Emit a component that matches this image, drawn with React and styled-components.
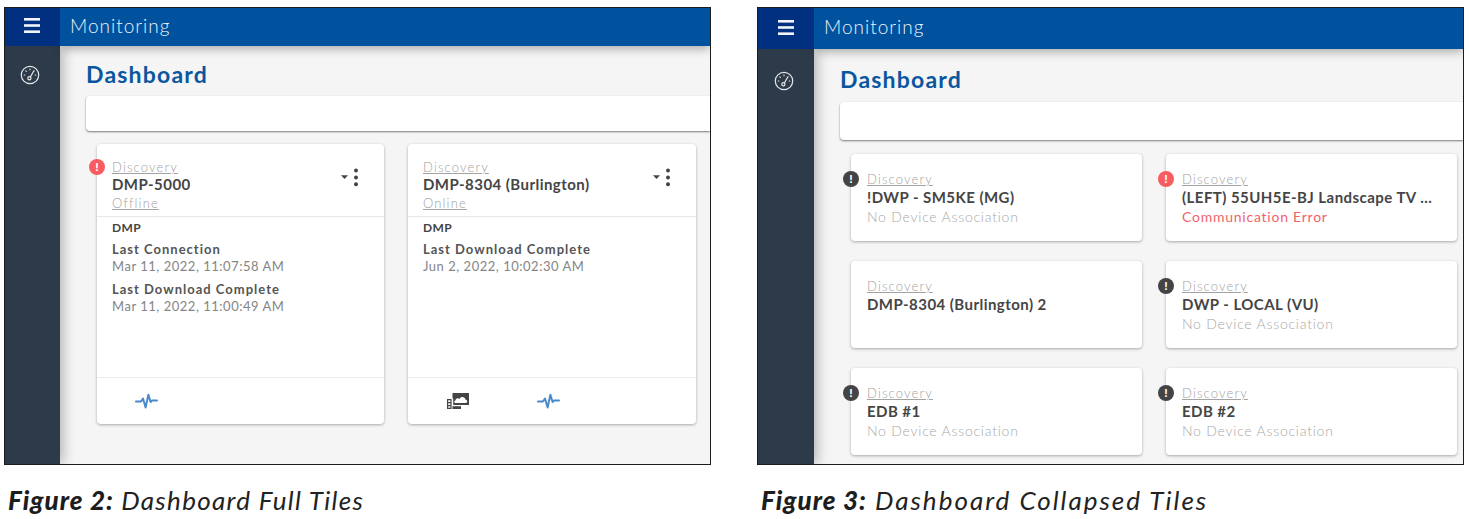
import styled, { createGlobalStyle } from 'styled-components';

const GlobalStyle = createGlobalStyle`
  body {
    margin: 0;
    background: #fff;
    font-family: 'Lato', 'Open Sans', sans-serif;
  }
`;

const Page = styled.div`
  display: flex;
  gap: 46px;
  width: 1469px;
  height: 519px;
  padding: 7px 0 0 4px;
  box-sizing: border-box;
  overflow: hidden;
`;

const Figure = styled.figure`
  margin: 0;
  width: 707px;
`;

const Frame = styled.div`
  display: grid;
  grid-template-columns: ${p => p.$rail}px 1fr;
  grid-template-rows: ${p => p.$bar}px 1fr;
  width: 707px;
  height: 458px;
  box-sizing: border-box;
  border: 1.5px solid #1c1c1c;
  overflow: hidden;
`;

const MenuCell = styled.div`
  display: flex;
  align-items: center;
  justify-content: center;
  padding: 0 1px 3px 0;
  background: #00307f;
  position: relative;
  z-index: 3;
`;

const TopBar = styled.header`
  display: flex;
  align-items: center;
  padding: 0 0 ${p => p.$lift}px 10px;
  background: #00529f;
  color: #eef3fa;
  font-size: 19px;
  font-weight: 300;
  letter-spacing: 1px;
  box-shadow: 0 3px 9px rgba(0, 0, 0, 0.3);
  position: relative;
  z-index: 2;
`;

const SideRail = styled.nav`
  display: flex;
  justify-content: center;
  padding: ${p => p.$top}px 5px 0 0;
  background: #2d3a49;
  box-shadow: 3px 0 12px rgba(0, 0, 0, 0.28);
  position: relative;
  z-index: 1;
`;

const Main = styled.main`
  display: flex;
  flex-direction: column;
  padding-left: 26px;
  background: #f5f5f5;
  min-width: 0;
`;

const Heading = styled.h1`
  margin: ${p => p.$top}px 0 ${p => p.$bottom}px;
  height: 28px;
  line-height: 28px;
  font-size: 23px;
  font-weight: 700;
  letter-spacing: 1.2px;
  color: #0a569f;
`;

const FilterBar = styled.div`
  flex: none;
  height: ${p => p.$height}px;
  background: #fff;
  border-radius: 4px 0 0 4px;
  box-shadow: 0 1px 2px rgba(0, 0, 0, 0.5);
`;

const TileGrid = styled.div`
  display: grid;
  grid-template-columns: ${p => p.$columns};
  grid-auto-rows: ${p => p.$row}px;
  column-gap: 24px;
  row-gap: ${p => p.$rowGap}px;
  margin: ${p => p.$top}px 0 0 11px;
`;

const Tile = styled.article`
  display: flex;
  flex-direction: column;
  position: relative;
  background: #fff;
  border-radius: 4px;
  box-shadow: 0 1px 3px rgba(0, 0, 0, 0.32);
`;

const Badge = styled.span`
  position: absolute;
  left: -8px;
  top: ${p => p.$top}px;
  display: flex;
  align-items: center;
  justify-content: center;
  width: 16px;
  height: 16px;
  border-radius: 50%;
  background: ${p => (p.$error ? '#f95c60' : '#444444')};
  color: #fff;
  font-size: 12px;
  font-weight: 900;
  line-height: 1;
`;

const TileHead = styled.div`
  display: flex;
  align-items: flex-start;
  justify-content: space-between;
  height: ${p => p.$height}px;
  padding: ${p => p.$top}px 24px 0 ${p => p.$left}px;
  box-sizing: border-box;
  flex: none;
  ${p => p.$ruled && 'border-bottom: 1px solid #e8e8e8;'}
`;

const HeadText = styled.div`
  min-width: 0;
  flex: 1;
`;

const SmallLink = styled.div`
  height: 16px;
  line-height: 16px;
  font-size: 13px;
  font-weight: 300;
  letter-spacing: 1.15px;
  color: #a2a2a2;
  text-decoration: underline;
  text-underline-offset: 1px;
`;

const TileName = styled.div`
  height: ${p => (p.$compact ? 18 : 20)}px;
  margin-bottom: ${p => (p.$compact ? 2 : 0)}px;
  line-height: ${p => (p.$compact ? 18 : 20)}px;
  font-size: 15px;
  font-weight: 700;
  letter-spacing: 0.45px;
  color: #454545;
  white-space: nowrap;
`;

const StatusLine = styled.div`
  height: 20px;
  line-height: 20px;
  font-size: 14px;
  font-weight: ${p => (p.$error ? 400 : 300)};
  letter-spacing: 0.76px;
  color: ${p => (p.$error ? '#f0636b' : '#a8a8a8')};
`;

const TileActions = styled.div`
  display: flex;
  align-items: center;
  margin-top: 9px;
`;

const TileBody = styled.div`
  flex: 1;
  padding: 2px 15px 0;
`;

const TypeLabel = styled.div`
  height: 17px;
  line-height: 17px;
  font-size: 12px;
  font-weight: 700;
  letter-spacing: 0.4px;
  color: #444;
  margin-bottom: 4px;
`;

const FieldLabel = styled.div`
  height: 18px;
  line-height: 18px;
  font-size: 13px;
  font-weight: 700;
  letter-spacing: 1px;
  color: #555;
`;

const FieldValue = styled.div`
  height: 17px;
  line-height: 17px;
  font-size: 13px;
  letter-spacing: 0.52px;
  color: #858585;
  margin-bottom: 5px;
`;

const TileFoot = styled.div`
  display: flex;
  flex: none;
  height: 47px;
  box-sizing: border-box;
  padding-left: 4px;
  border-top: 1px solid #ebebeb;
`;

const FootSlot = styled.div`
  display: flex;
  align-items: center;
  justify-content: center;
  width: 91px;
`;

const Caption = styled.figcaption`
  margin-top: 20px;
  padding-left: 4px;
  height: 30px;
  line-height: 30px;
  font-size: 26px;
  font-style: italic;
  font-weight: 400;
  letter-spacing: ${p => p.$spacing}px;
  color: #222;
  white-space: nowrap;
`;

const CaptionTag = styled.b`
  font-weight: 900;
  letter-spacing: 1px;
  color: #1d1d1d;
`;

const MenuIcon = () => (
  <svg width="16" height="15" viewBox="0 0 16 15" fill="#f2f5fa">
    <rect y="0" width="16" height="2.6" />
    <rect y="6.2" width="16" height="2.6" />
    <rect y="12.4" width="16" height="2.6" />
  </svg>
);

const GaugeIcon = () => (
  <svg width="20" height="20" viewBox="0 0 20 20" fill="none" stroke="#e4e7ea" strokeWidth="1.2" strokeLinecap="round">
    <circle cx="10" cy="10" r="8.7" />
    <path d="M4.2 10h.6M5.9 5.9l.4.4M10 4.1v.6M14.1 5.9l-.4.4M15.8 10h-.6" />
    <path d="M13.6 6.2 10.4 12" />
    <circle cx="9.4" cy="13.3" r="1.6" />
  </svg>
);

const TileMenuIcon = () => (
  <svg width="19" height="19" viewBox="0 0 19 19" fill="#444">
    <path d="M0 7.3h7L3.5 11z" />
    <circle cx="15" cy="2.6" r="2" />
    <circle cx="15" cy="9.4" r="2" />
    <circle cx="15" cy="16.2" r="2" />
  </svg>
);

const PulseIcon = () => (
  <svg width="23" height="16" viewBox="0 0 23 16" fill="none" stroke="#4a8acb" strokeWidth="2" strokeLinejoin="round" strokeLinecap="round">
    <path d="M1 8.5h5l2-3 2.6 9L13.4 1.8l2.2 7.2 1.5-1.6H22" />
  </svg>
);

const CloudFilesIcon = () => (
  <svg width="22" height="16" viewBox="0 0 22 16">
    <path fill="#444" d="M5.5 0H22v12H5.5z" />
    <path fill="#fff" d="M8.6 10c-1.6 0-1.9-2.3-.2-2.6.3-2.1 2.9-2.8 4.2-1.4 1.1-2.8 5.4-2.5 6 .8 2.1.2 2.3 3.2.1 3.2z" />
    <path fill="#fff" d="M4 5.5h2.2V13H4z" />
    <path fill="#444" d="M5.5 13.2H14V16H5.5z" />
    <path fill="#444" fillRule="evenodd" d="M0 6h4.6v10H0zM1.2 7.3v1.6h2.2V7.3zm0 3v1.6h2.2v-1.6zm0 3v1.5h2.2v-1.5z" />
  </svg>
);

const fullTiles = [
  {
    name: 'DMP-5000',
    status: 'Offline',
    error: true,
    fields: [
      ['Last Connection', 'Mar 11, 2022, 11:07:58 AM'],
      ['Last Download Complete', 'Mar 11, 2022, 11:00:49 AM'],
    ],
    cloud: false,
  },
  {
    name: 'DMP-8304 (Burlington)',
    status: 'Online',
    fields: [['Last Download Complete', 'Jun 2, 2022, 10:02:30 AM']],
    cloud: true,
  },
];

const collapsedTiles = [
  { name: '!DWP - SM5KE (MG)', status: 'No Device Association', badge: 'dark' },
  { name: '(LEFT) 55UH5E-BJ Landscape TV …', status: 'Communication Error', badge: 'error' },
  { name: 'DMP-8304 (Burlington) 2', status: '' },
  { name: 'DWP - LOCAL (VU)', status: 'No Device Association', badge: 'dark' },
  { name: 'EDB #1', status: 'No Device Association', badge: 'dark' },
  { name: 'EDB #2', status: 'No Device Association', badge: 'dark' },
];

const Shell = ({ rail, bar, lift, gaugeTop, headTop, headBottom, barHeight, children }) => (
  <Frame $rail={rail} $bar={bar}>
    <MenuCell>
      <MenuIcon />
    </MenuCell>
    <TopBar $lift={lift}>Monitoring</TopBar>
    <SideRail $top={gaugeTop}>
      <GaugeIcon />
    </SideRail>
    <Main>
      <Heading $top={headTop} $bottom={headBottom}>Dashboard</Heading>
      <FilterBar $height={barHeight} />
      {children}
    </Main>
  </Frame>
);

const FullTile = ({ tile }) => (
  <Tile>
    {tile.error && <Badge $error $top={15}>!</Badge>}
    <TileHead $ruled $height={73} $top={15} $left={15}>
      <HeadText>
        <SmallLink>Discovery</SmallLink>
        <TileName $compact>{tile.name}</TileName>
        <SmallLink>{tile.status}</SmallLink>
      </HeadText>
      <TileActions>
        <TileMenuIcon />
      </TileActions>
    </TileHead>
    <TileBody>
      <TypeLabel>DMP</TypeLabel>
      {tile.fields.map(([label, value]) => (
        <div key={label}>
          <FieldLabel>{label}</FieldLabel>
          <FieldValue>{value}</FieldValue>
        </div>
      ))}
    </TileBody>
    <TileFoot>
      {tile.cloud && (
        <FootSlot>
          <CloudFilesIcon />
        </FootSlot>
      )}
      <FootSlot>
        <PulseIcon />
      </FootSlot>
    </TileFoot>
  </Tile>
);

const CollapsedTile = ({ tile }) => (
  <Tile>
    {tile.badge && <Badge $error={tile.badge === 'error'} $top={17}>!</Badge>}
    <TileHead $height={87} $top={17} $left={16}>
      <HeadText>
        <SmallLink>Discovery</SmallLink>
        <TileName>{tile.name}</TileName>
        <StatusLine $error={tile.badge === 'error'}>{tile.status}</StatusLine>
      </HeadText>
    </TileHead>
  </Tile>
);

export default function App() {
  return (
    <>
      <GlobalStyle />
      <Page>
        <Figure>
          <Shell rail={55} bar={38} lift={3} gaugeTop={19} headTop={14} headBottom={8} barHeight={35}>
            <TileGrid $columns="287px 288px" $row={280} $rowGap={20} $top={13}>
              {fullTiles.map(tile => (
                <FullTile key={tile.name} tile={tile} />
              ))}
            </TileGrid>
          </Shell>
          <Caption $spacing={1.3}>
            <CaptionTag>Figure 2:</CaptionTag> Dashboard Full Tiles
          </Caption>
        </Figure>
        <Figure>
          <Shell rail={56} bar={41} lift={5} gaugeTop={22} headTop={16} headBottom={9} barHeight={38}>
            <TileGrid $columns="291px 291px" $row={87} $rowGap={20} $top={14}>
              {collapsedTiles.map(tile => (
                <CollapsedTile key={tile.name} tile={tile} />
              ))}
            </TileGrid>
          </Shell>
          <Caption $spacing={2}>
            <CaptionTag>Figure 3:</CaptionTag> Dashboard Collapsed Tiles
          </Caption>
        </Figure>
      </Page>
    </>
  );
}
